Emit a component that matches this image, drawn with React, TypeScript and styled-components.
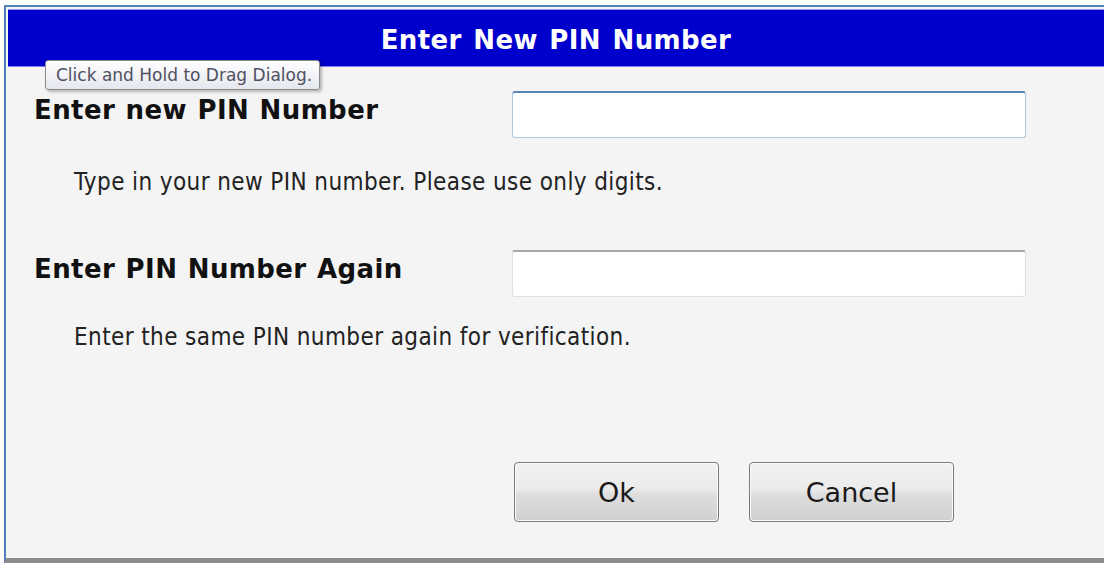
import * as React from 'react'
import styled, { createGlobalStyle } from 'styled-components'

const GlobalStyle = createGlobalStyle`
  html, body {
    margin: 0;
    padding: 0;
    background: #ffffff;
    overflow: hidden;
  }
`

const Frame = styled.div`
  position: relative;
  margin: 5px 0 0 4px;
  height: 558px;
  box-sizing: border-box;
  border-top: 2px solid #4f81bd;
  border-left: 2px solid #4f81bd;
  border-bottom: 5px solid #8c8c8c;
  background: #f4f4f4;
  display: flex;
  flex-direction: column;
`

const TitleBar = styled.div`
  margin: 2px 0 0 2px;
  height: 53px;
  padding-top: 3px;
  background: #0000cc;
  border-top: 1px solid #9a9af0;
  border-bottom: 1px solid #8080e8;
  display: flex;
  align-items: center;
  justify-content: center;
  color: #ffffff;
  font-family: 'DejaVu Sans', sans-serif;
  font-weight: bold;
  font-size: 26px;
  letter-spacing: 0.4px;
  word-spacing: 2px;
`

const Tooltip = styled.div`
  position: absolute;
  left: 39px;
  top: 53px;
  height: 30px;
  box-sizing: border-box;
  padding: 0 7px 0 10px;
  display: flex;
  align-items: center;
  font-family: 'DejaVu Sans', sans-serif;
  font-size: 17px;
  color: #505060;
  background: linear-gradient(#ffffff, #e4e7ee);
  border: 1px solid #8a8a8a;
  border-radius: 3px;
  box-shadow: 2px 2px 3px rgba(0, 0, 0, 0.25);
`

const Body = styled.div`
  flex: 1;
  padding: 24px 78px 0 28px;
  display: flex;
  flex-direction: column;
`

const FieldRow = styled.div<{ $top: number }>`
  display: flex;
  align-items: center;
  justify-content: space-between;
  margin-top: ${p => p.$top}px;
`

const Label = styled.label`
  margin-bottom: 9px;
  font-family: 'DejaVu Sans', sans-serif;
  font-weight: bold;
  font-size: 26px;
  letter-spacing: 0.4px;
  color: #111111;
  word-spacing: 1px;
`

const Field = styled.input<{ $active?: boolean }>`
  width: 514px;
  height: 47px;
  box-sizing: border-box;
  background: #ffffff;
  border: 1px solid ${p => (p.$active ? '#a9c8e4' : '#dde1e6')};
  border-top: 2px solid ${p => (p.$active ? '#5b87b5' : '#a8a8a8')};
  border-radius: 3px;
  outline: none;
`

const Hint = styled.p<{ $top: number }>`
  margin: ${p => p.$top}px 0 0 40px;
  line-height: 28px;
  font-family: 'DejaVu Sans Condensed', 'DejaVu Sans', sans-serif;
  font-stretch: condensed;
  font-size: 24px;
  color: #222222;
  letter-spacing: 0.4px;
`

const Actions = styled.div`
  display: flex;
  gap: 30px;
  margin: auto 0 36px 480px;
`

const Button = styled.button`
  width: 205px;
  height: 60px;
  box-sizing: border-box;
  border: 1px solid #7a7a7a;
  border-radius: 4px;
  background: linear-gradient(#f2f2f2 0%, #ebebeb 45%, #dddddd 55%, #d0d0d0 100%);
  box-shadow: inset 0 0 0 1px #fcfcfc;
  font-family: 'DejaVu Sans', sans-serif;
  font-size: 27px;
  color: #1a1a1a;
  cursor: pointer;
`

export default function App() {
  return (
    <>
      <GlobalStyle />
      <Frame>
        <TitleBar>Enter New PIN Number</TitleBar>
        <Tooltip>Click and Hold to Drag Dialog.</Tooltip>
        <Body>
          <FieldRow $top={0}>
            <Label>Enter new PIN Number</Label>
            <Field type="password" $active />
          </FieldRow>
          <Hint $top={30}>Type in your new PIN number. Please use only digits.</Hint>
          <FieldRow $top={54}>
            <Label>Enter PIN Number Again</Label>
            <Field type="password" />
          </FieldRow>
          <Hint $top={26}>Enter the same PIN number again for verification.</Hint>
          <Actions>
            <Button>Ok</Button>
            <Button>Cancel</Button>
          </Actions>
        </Body>
      </Frame>
    </>
  )
}
